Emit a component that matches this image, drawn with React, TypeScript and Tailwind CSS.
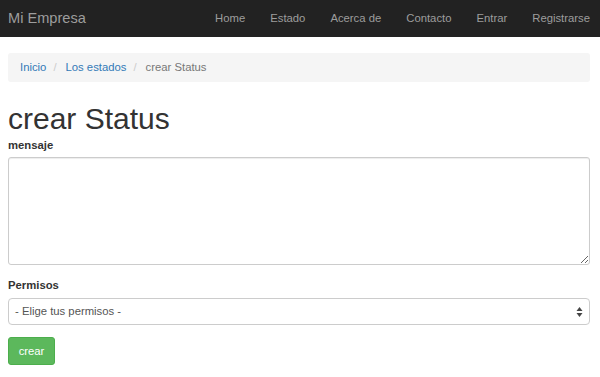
import React from "react";

export default function App() {
  const links = ["Home", "Estado", "Acerca de", "Contacto", "Entrar", "Registrarse"];
  return (
    <div className="w-[600px] h-[377px] bg-white text-[#333] overflow-hidden" style={{ fontFamily: '"Liberation Sans", Arial, sans-serif' }}>
      <nav className="h-[37px] bg-[#222] flex items-center justify-between pl-[8px] pr-[10px]">
        <span className="text-[14.6px] text-[#9d9d9d]">Mi Empresa</span>
        <ul className="flex items-center gap-[25px] text-[11.3px] text-[#9d9d9d]">
          {links.map((l) => (
            <li key={l}>{l}</li>
          ))}
        </ul>
      </nav>
      <div className="px-[8px] pr-[10px]">
        <div className="mt-[16px] h-[29px] bg-[#f5f5f5] rounded-[3px] flex items-center px-[12px] text-[11.3px]">
          <span className="text-[#337ab7]">Inicio</span>
          <span className="text-[#ccc] pl-[7px] pr-[9px]">/</span>
          <span className="text-[#337ab7]">Los estados</span>
          <span className="text-[#ccc] pl-[7px] pr-[9px]">/</span>
          <span className="text-[#777]">crear Status</span>
        </div>
        <h1 className="mt-[20px] text-[30px] leading-[33px] font-normal text-[#333]">crear Status</h1>
        <label className="block mt-[2px] text-[11.3px] font-bold leading-[17px]">mensaje</label>
        <textarea className="block mt-[3px] w-full h-[108px] border border-[#ccc] rounded-[3px] shadow-[inset_0_1px_1px_rgba(0,0,0,0.075)] outline-none" />
        <label className="block mt-[12px] text-[11.3px] font-bold leading-[17px]">Permisos</label>
        <div className="relative mt-[4px] h-[27px] w-full border border-[#ccc] rounded-[4px] flex items-center px-[6px] text-[11.3px] text-[#555] bg-white">
          - Elige tus permisos -
          <svg className="absolute right-[6px] top-1/2 -translate-y-1/2" width="7" height="11" viewBox="0 0 7 11">
            <path d="M3.5 0.5 L6.5 4.5 L0.5 4.5 Z" fill="#444" />
            <path d="M3.5 10.5 L6.5 6.5 L0.5 6.5 Z" fill="#444" />
          </svg>
        </div>
        <button className="mt-[12px] w-[47px] h-[28px] bg-[#5cb85c] border border-[#4cae4c] rounded-[3px] text-white text-[11.3px] flex items-center justify-center">
          crear
        </button>
      </div>
    </div>
  );
}
